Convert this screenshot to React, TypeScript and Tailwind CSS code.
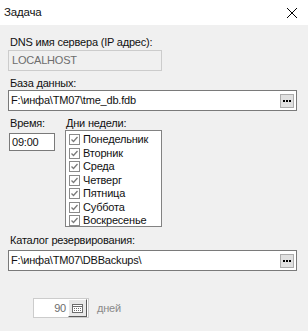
import React from 'react';

const days = ['Понедельник', 'Вторник', 'Среда', 'Четверг', 'Пятница', 'Суббота', 'Воскресенье'];

function Dots() {
  return (
    <div className="w-[14px] h-[14px] bg-[#e1e1e1] border border-[#adadad] flex items-center justify-center gap-[1px] shrink-0">
      <span className="w-[2px] h-[2px] bg-black" />
      <span className="w-[2px] h-[2px] bg-black" />
      <span className="w-[2px] h-[2px] bg-black" />
    </div>
  );
}

function Check() {
  return (
    <svg width="11" height="11" viewBox="0 0 11 11" className="shrink-0">
      <rect x="0.5" y="0.5" width="10" height="10" fill="#fff" stroke="#8a8a8a" />
      <path d="M2.5 5.5 L4.5 7.5 L8.5 3" fill="none" stroke="#7a7a7a" strokeWidth="1.3" />
    </svg>
  );
}

export default function App() {
  return (
    <div className="w-[308px] h-[331px] bg-[#f0f0f0] text-[11px] tracking-[-0.2px] text-[#111] overflow-hidden" style={{ fontFamily: '"Liberation Sans", Arial, sans-serif' }}>
      <div className="h-[25px] bg-white flex items-center justify-between pl-[4px] pr-[11px]">
        <span className="text-[11.5px]">Задача</span>
        <svg width="10" height="10" viewBox="0 0 10 10">
          <path d="M0 0 L10 10 M10 0 L0 10" stroke="#000" strokeWidth="1" />
        </svg>
      </div>

      <div className="px-[8px] flex flex-col">
        <div className="mt-[10px] leading-[14px] pl-[2px]">DNS имя сервера (IP адрес):</div>
        <div className="mt-[1px] h-[21px] w-[154px] border border-[#cccccc] bg-[#f0f0f0] flex items-center pl-[3px] text-[#6d6d6d]">LOCALHOST</div>

        <div className="mt-[5px] leading-[14px] pl-[2px]">База данных:</div>
        <div className="h-[21px] w-[289px] border border-[#7a7a7a] bg-white flex items-center justify-between pl-[2px] pr-[2px]">
          <span>F:\инфа\TM07\tme_db.fdb</span>
          <Dots />
        </div>

        <div className="mt-[5px] flex">
          <div className="flex flex-col w-[57px]">
            <div className="leading-[14px] pl-[2px]">Время:</div>
            <div className="mt-[3px] ml-[1px] h-[18px] w-[46px] border border-[#7a7a7a] bg-white flex items-center pl-[2px]">09:00</div>
          </div>
          <div className="flex flex-col">
            <div className="leading-[14px] pl-[1px]">Дни недели:</div>
            <div className="h-[97px] w-[97px] border border-[#828282] bg-white pt-[2px] pl-[3px]">
              {days.map((d) => (
                <div key={d} className="h-[13.5px] flex items-center gap-[3px]">
                  <Check />
                  <span className="leading-[13px]">{d}</span>
                </div>
              ))}
            </div>
          </div>
        </div>

        <div className="mt-[6px] leading-[14px] pl-[2px]">Каталог резервирования:</div>
        <div className="mt-[3px] h-[21px] w-[289px] border border-[#7a7a7a] bg-white flex items-center justify-between pl-[2px] pr-[2px]">
          <span>F:\инфа\TM07\DBBackups\</span>
          <Dots />
        </div>

        <div className="mt-[27px] ml-[25px] flex items-center gap-[8px]">
          <div className="h-[20px] w-[56px] border border-[#cccccc] bg-white flex items-center justify-end pr-[1px]">
            <span className="text-[#6d6d6d] mr-[2px]">90</span>
            <div className="h-[18px] w-[19px] bg-[#e8e8e8] border-t border-l border-white border-r border-b border-r-[#5a5a5a] border-b-[#5a5a5a] flex items-center justify-center">
              <svg width="11" height="9" viewBox="0 0 11 9">
                <rect x="0.5" y="0.5" width="10" height="8" fill="#fff" stroke="#6d6d6d" />
                <path d="M0.5 2.5 H10.5" stroke="#6d6d6d" />
                <path d="M2 4.5 H3 M4 4.5 H5 M6 4.5 H7 M8 4.5 H9 M2 6.5 H3 M4 6.5 H5 M6 6.5 H7 M8 6.5 H9" stroke="#6d6d6d" />
              </svg>
            </div>
          </div>
          <span className="text-[#8a8a8a]">дней</span>
        </div>
      </div>
    </div>
  );
}
